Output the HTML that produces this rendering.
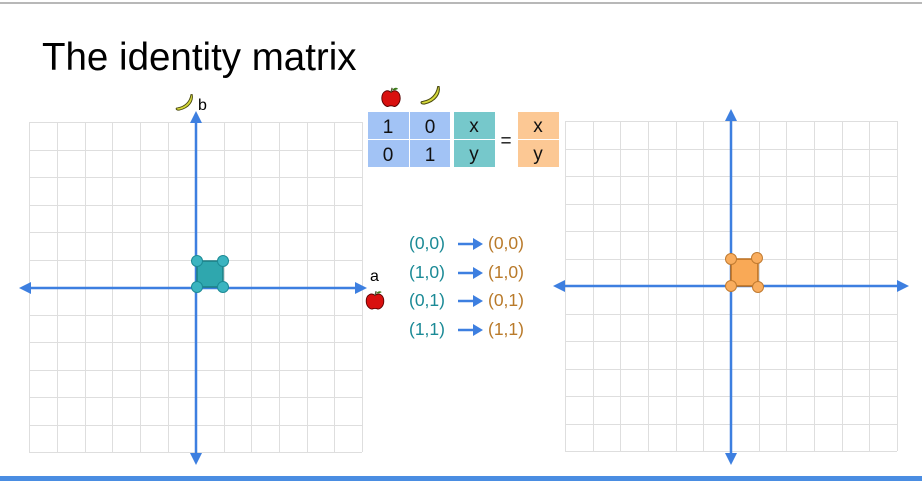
<!DOCTYPE html>
<html><head><meta charset="utf-8"><style>
html,body{margin:0;padding:0;background:#fff;width:922px;height:481px;overflow:hidden}
svg{display:block}
text{font-family:"Liberation Sans",Arial,sans-serif}
</style></head><body>
<svg width="922" height="481" viewBox="0 0 922 481" xmlns="http://www.w3.org/2000/svg">
<defs>
<g id="apple">
<path d="M0 -4 C-3 -7 -8 -5 -8 1 C-8 6 -4 9 -2 8 C-1 7.5 1 7.5 2 8 C4 9 8 6 8 1 C8 -5 3 -7 0 -4Z" fill="#d9100f" stroke="#5a0000" stroke-width="0.8"/>
<path d="M0 -4 L1 -8" stroke="#553" stroke-width="1.2"/>
<path d="M1 -6 C3 -9 6 -8 6 -7 C4 -6 3 -6 1 -6Z" fill="#3a7a1a"/>
</g>
<g id="banana">
<path d="M6 -7 C7 -2 4 4 -5 6 C-8 6 -8 4 -6 4 C0 3 4 -1 5 -7Z" fill="#d6d93a" stroke="#4a4a10" stroke-width="0.8"/>
</g>
</defs>
<line x1="0" y1="3" x2="922" y2="3" stroke="#a0a0a0" stroke-width="1.5"/>
<text x="42" y="70" font-size="38.5" fill="#000">The identity matrix</text>

<g stroke="#dedede" stroke-width="1" id="grids">
<path d="M29.5 122V452M57.5 122V452M85.5 122V452M112.5 122V452M140.5 122V452M168.5 122V452M196.5 122V452M224.5 122V452M251.5 122V452M279.5 122V452M307.5 122V452M334.5 122V452M362.5 122V452"/>
<path d="M29 122.5H362M29 150.5H362M29 177.5H362M29 205.5H362M29 232.5H362M29 260.5H362M29 287.5H362M29 315.5H362M29 342.5H362M29 370.5H362M29 397.5H362M29 425.5H362M29 452.5H362"/>
<path d="M565.5 121V451M593.5 121V451M620.5 121V451M648.5 121V451M676.5 121V451M703.5 121V451M731.5 121V451M759.5 121V451M786.5 121V451M814.5 121V451M842.5 121V451M869.5 121V451M897.5 121V451"/>
<path d="M565 121.5H897M565 149.5H897M565 176.5H897M565 204.5H897M565 231.5H897M565 259.5H897M565 286.5H897M565 314.5H897M565 341.5H897M565 369.5H897M565 396.5H897M565 424.5H897M565 451.5H897"/>
</g>

<g stroke="#3d7fe0" stroke-width="2.5">
<line x1="28" y1="288" x2="358" y2="288"/>
<line x1="196" y1="120" x2="196" y2="456"/>
</g>
<g fill="#3d7fe0">
<polygon points="19,288 31,282 31,294"/>
<polygon points="367,288 355,282 355,294"/>
<polygon points="196,111 190,123 202,123"/>
<polygon points="196,465 190,453 202,453"/>
</g>
<rect x="197" y="261" width="26" height="26" fill="#2fa7ae" stroke="#1c7d83" stroke-width="1.5"/>
<g fill="#3bb4c0" stroke="#1c8a94" stroke-width="1">
<circle cx="197" cy="261" r="5.5"/><circle cx="223" cy="261" r="5.5"/>
<circle cx="197" cy="287" r="5.5"/><circle cx="223" cy="287" r="5.5"/>
</g>
<use href="#banana" transform="translate(185,103) scale(1.2)"/>
<text x="198" y="110" font-size="16">b</text>
<text x="370" y="281" font-size="16">a</text>
<use href="#apple" transform="translate(375,300) scale(1.1)"/>

<use href="#apple" transform="translate(391,97) scale(1.15)"/>
<use href="#banana" transform="translate(431,96) scale(1.35)"/>
<g fill="#a2c3f5">
<rect x="368" y="112" width="41" height="27"/><rect x="410" y="112" width="40" height="27"/>
<rect x="368" y="140" width="41" height="27"/><rect x="410" y="140" width="40" height="27"/>
</g>
<rect x="454" y="112" width="41" height="27" fill="#76c8cb"/>
<rect x="454" y="140" width="41" height="27" fill="#76c8cb"/>
<rect x="518" y="112" width="41" height="27" fill="#fcc894"/>
<rect x="518" y="140" width="41" height="27" fill="#fcc894"/>
<g font-size="19" text-anchor="middle" fill="#111">
<text x="388" y="133">1</text><text x="430" y="133">0</text>
<text x="388" y="161">0</text><text x="430" y="161">1</text>
<text x="474" y="132">x</text><text x="474" y="160">y</text>
<text x="538" y="132">x</text><text x="538" y="160">y</text>
<text x="506" y="147">=</text>
</g>

<g font-size="17.5">
<g fill="#1b8a96">
<text x="409" y="249">(0,0)</text><text x="409" y="278">(1,0)</text>
<text x="409" y="306">(0,1)</text><text x="409" y="335">(1,1)</text>
</g>
<g fill="#b97a2a">
<text x="488" y="249">(0,0)</text><text x="488" y="278">(1,0)</text>
<text x="488" y="306">(0,1)</text><text x="488" y="335">(1,1)</text>
</g>
</g>
<g stroke="#3d7fe0" stroke-width="2.5" fill="#3d7fe0">
<line x1="458" y1="244" x2="474" y2="244"/><polygon points="483,244 473,238 473,250" stroke="none"/>
<line x1="458" y1="273" x2="474" y2="273"/><polygon points="483,273 473,267 473,279" stroke="none"/>
<line x1="458" y1="301" x2="474" y2="301"/><polygon points="483,301 473,295 473,307" stroke="none"/>
<line x1="458" y1="330" x2="474" y2="330"/><polygon points="483,330 473,324 473,336" stroke="none"/>
</g>

<g stroke="#3d7fe0" stroke-width="2.5">
<line x1="562" y1="286" x2="900" y2="286"/>
<line x1="731" y1="118" x2="731" y2="456"/>
</g>
<g fill="#3d7fe0">
<polygon points="553,286 565,280 565,292"/>
<polygon points="909,286 897,280 897,292"/>
<polygon points="731,109 725,121 737,121"/>
<polygon points="731,465 725,453 737,453"/>
</g>
<rect x="731" y="259" width="27" height="27" fill="#f9a956" stroke="#b86d1e" stroke-width="1.5"/>
<g fill="#f9ad5e" stroke="#c07a30" stroke-width="1">
<circle cx="731" cy="259" r="5.5"/><circle cx="757" cy="258" r="5.5"/>
<circle cx="731" cy="286" r="5.5"/><circle cx="758" cy="287" r="5.5"/>
</g>

<rect x="0" y="476" width="922" height="5" fill="#4a8de2"/>
</svg>
</body></html>
